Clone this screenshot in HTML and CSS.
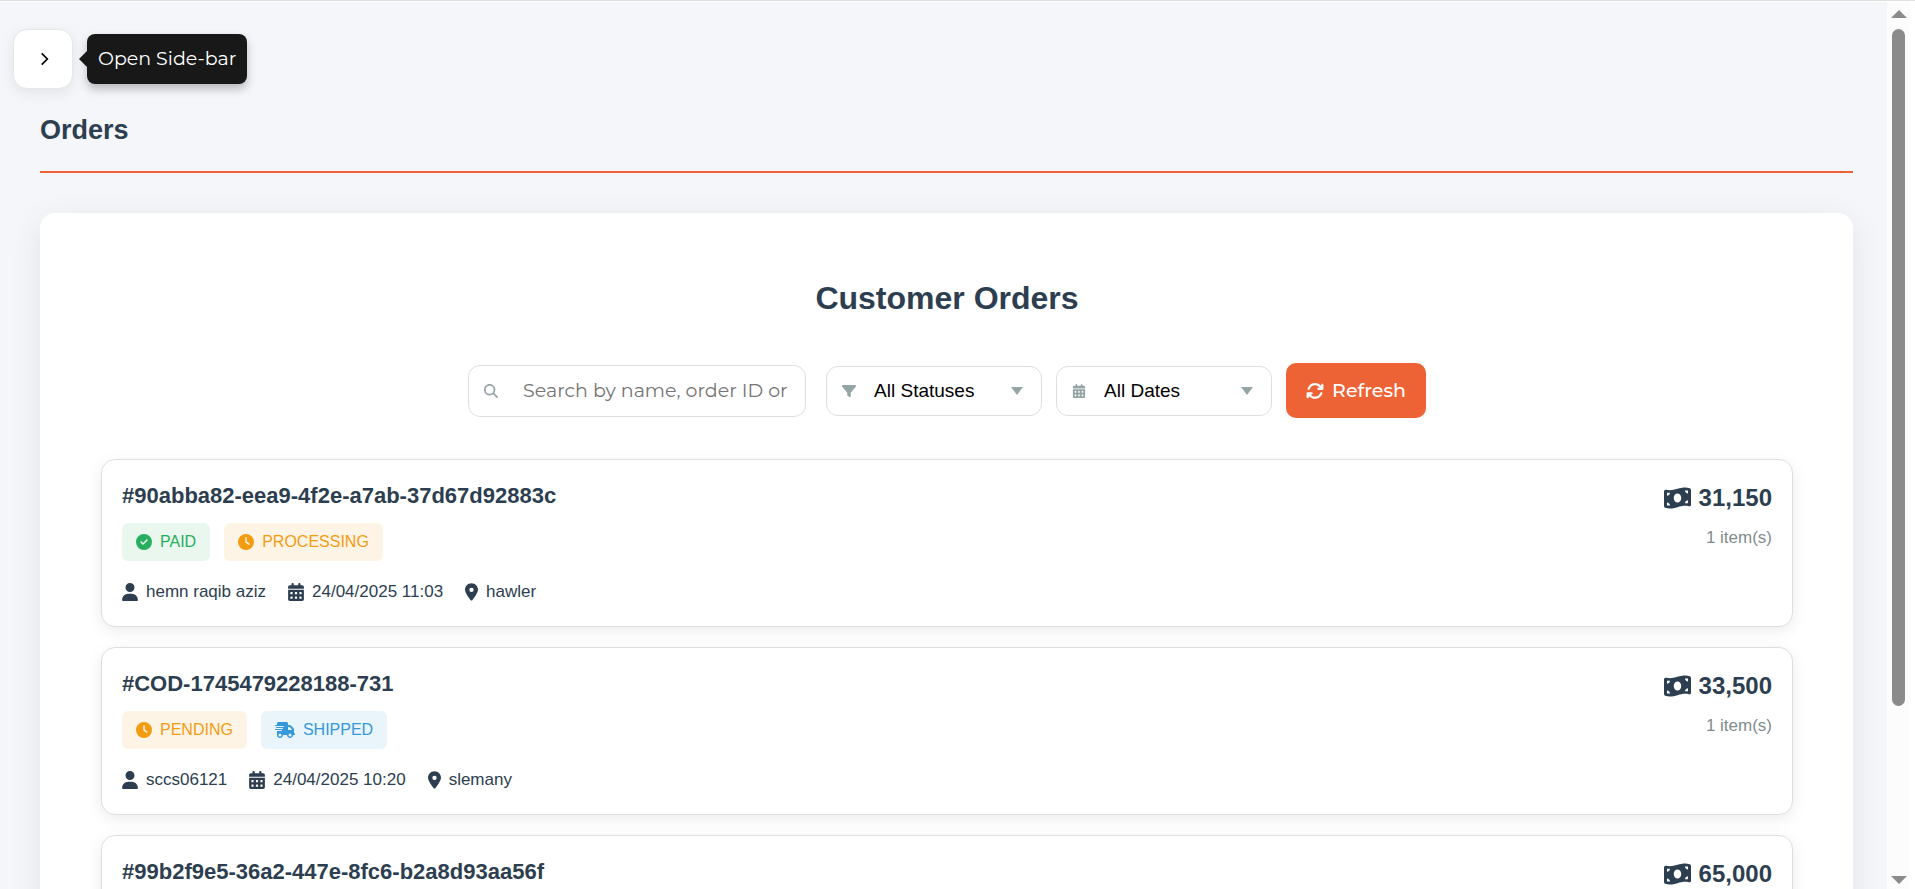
FILE: index.html
```html
<!DOCTYPE html>
<html lang="en">
<head>
<meta charset="utf-8">
<title>Orders</title>
<link rel="stylesheet" href="styles.css">
</head>
<body>
<svg class="sprite" aria-hidden="true">
  <symbol id="check" viewBox="0 0 512 512"><path d="M256 512A256 256 0 1 0 256 0a256 256 0 1 0 0 512zM369 209L241 337c-9.4 9.4-24.6 9.4-33.9 0l-64-64c-9.4-9.4-9.4-24.6 0-33.9s24.6-9.4 33.9 0l47 47L335 175c9.4-9.4 24.6-9.4 33.9 0s9.4 24.6 0 33.9z"/></symbol>
  <symbol id="clock" viewBox="0 0 512 512"><path d="M256 0a256 256 0 1 1 0 512A256 256 0 1 1 256 0zM232 120l0 136c0 8 4 15.5 10.7 20l96 64c11 7.4 25.9 4.4 33.3-6.7s4.4-25.9-6.7-33.3L280 243.2 280 120c0-13.3-10.7-24-24-24s-24 10.7-24 24z"/></symbol>
  <symbol id="user" viewBox="0 0 448 512"><path d="M224 256A128 128 0 1 0 224 0a128 128 0 1 0 0 256zm-45.700 48C79.800 304 0 383.800 0 482.300C0 498.700 13.300 512 29.700 512l388.600 0c16.400 0 29.700-13.300 29.700-29.700C448 383.800 368.200 304 269.700 304l-91.400 0z"/></symbol>
  <symbol id="calendar" viewBox="0 0 448 512"><path fill-rule="evenodd" d="M128 0c17.700 0 32 14.300 32 32v32h128V32c0-17.700 14.300-32 32-32s32 14.300 32 32v32h48c26.500 0 48 21.500 48 48v48H0v-48c0-26.500 21.500-48 48-48h48V32c0-17.700 14.300-32 32-32zM0 192h448v272c0 26.500-21.500 48-48 48H48c-26.500 0-48-21.500-48-48zM80 256q-16 0-16 16v32q0 16 16 16h32q16 0 16-16v-32q0-16-16-16zM208 256q-16 0-16 16v32q0 16 16 16h32q16 0 16-16v-32q0-16-16-16zM336 256q-16 0-16 16v32q0 16 16 16h32q16 0 16-16v-32q0-16-16-16zM80 384q-16 0-16 16v32q0 16 16 16h32q16 0 16-16v-32q0-16-16-16zM208 384q-16 0-16 16v32q0 16 16 16h32q16 0 16-16v-32q0-16-16-16zM336 384q-16 0-16 16v32q0 16 16 16h32q16 0 16-16v-32q0-16-16-16z"/></symbol>
  <symbol id="pin" viewBox="0 0 384 512"><path d="M215.700 499.200C267 435 384 279.400 384 192C384 86 298 0 192 0S0 86 0 192c0 87.400 117 243 168.300 307.200c12.300 15.300 35.100 15.300 47.400 0zM192 128a64 64 0 1 1 0 128 64 64 0 1 1 0-128z"/></symbol>
  <symbol id="filter" viewBox="0 0 512 512"><path d="M3.900 54.900C10.500 40.900 24.500 32 40 32l432 0c15.500 0 29.500 8.900 36.100 22.900s4.600 30.500-5.200 42.500L320 320.900 320 448c0 12.100-6.800 23.200-17.700 28.600s-23.800 4.300-33.500-3l-64-48c-8.100-6-12.800-15.500-12.800-25.600l0-79.100L9 97.300C-.7 85.400-2.800 68.800 3.900 54.900z"/></symbol>
  <symbol id="search" viewBox="0 0 512 512"><path d="M416 208c0 45.900-14.900 88.300-40 122.700L502.600 457.400c12.500 12.500 12.500 32.800 0 45.300s-32.800 12.500-45.300 0L330.700 376c-34.400 25.200-76.800 40-122.700 40C93.100 416 0 322.900 0 208S93.100 0 208 0S416 93.100 416 208zM208 352a144 144 0 1 0 0-288 144 144 0 1 0 0 288z"/></symbol>
  <symbol id="refresh" viewBox="0 0 512 512"><path d="M105.100 202.600c7.700-21.800 20.200-42.300 37.800-59.800c62.500-62.500 163.800-62.500 226.300 0L386.300 160 352 160c-17.700 0-32 14.300-32 32s14.300 32 32 32l111.900 0c17.700 0 32-14.300 32-32l0-112c0-17.700-14.300-32-32-32s-32 14.300-32 32l0 35.200L414.400 97.600c-87.500-87.500-229.300-87.500-316.800 0C73.200 122 55.600 150.700 44.800 181.400c-5.900 16.700 2.900 34.900 19.500 40.800s34.900-2.900 40.800-19.500zM39 289.300c-5 1.500-9.800 4.200-13.700 8.200c-4 4-6.700 8.800-8.100 14c-.3 1.200-.6 2.500-.8 3.800c-.3 1.700-.4 3.400-.4 5.100L16 432c0 17.700 14.300 32 32 32s32-14.300 32-32l0-35.100 17.600 17.500c87.500 87.400 229.300 87.400 316.700 0c24.400-24.400 42.100-53.100 52.900-83.800c5.900-16.700-2.900-34.900-19.500-40.800s-34.900 2.900-40.800 19.500c-7.700 21.800-20.200 42.300-37.800 59.800c-62.500 62.500-163.800 62.500-226.300 0l-.1-.1L125.600 352l34.400 0c17.700 0 32-14.300 32-32s-14.300-32-32-32L48.400 288c-1.600 0-3.200 .1-4.800 .3s-3.100 .5-4.600 1z"/></symbol>
  <symbol id="money" viewBox="0 0 576 512"><path fill-rule="evenodd" d="M0 112.500V422.300c0 18 10.100 35 27 41.300c87 32.500 174 10.300 261-11.900c79.800-20.300 159.600-40.700 239.300-18.900c23 6.300 48.700-9.500 48.700-33.400V89.700c0-18-10.100-35-27-41.300C462 15.900 375 38.100 288 60.300C208.200 80.600 128.400 100.900 48.700 79.100C25.600 72.800 0 88.600 0 112.500zM288 352c-44.200 0-80-43-80-96s35.800-96 80-96s80 43 80 96s-35.800 96-80 96zM64 352c35.300 0 64 28.700 64 64H64V352zM128 144c0 35.300-28.700 64-64 64V144h64zM512 304v64H448c0-35.300 28.700-64 64-64zM448 96h64v64c-35.300 0-64-28.700-64-64z"/></symbol>
  <symbol id="truck" viewBox="0 0 640 512"><path d="M112 0C85.500 0 64 21.500 64 48l0 48L16 96c-8.800 0-16 7.200-16 16s7.200 16 16 16l48 0 208 0c8.800 0 16 7.200 16 16s-7.200 16-16 16L64 160l-16 0c-8.800 0-16 7.200-16 16s7.200 16 16 16l16 0 176 0c8.800 0 16 7.200 16 16s-7.200 16-16 16L64 224l-48 0c-8.800 0-16 7.200-16 16s7.200 16 16 16l48 0 144 0c8.800 0 16 7.200 16 16s-7.200 16-16 16L64 288l0 128c0 53 43 96 96 96s96-43 96-96l128 0c0 53 43 96 96 96s96-43 96-96l32 0c17.700 0 32-14.300 32-32s-14.300-32-32-32l0-64 0-32 0-18.700c0-17-6.700-33.300-18.700-45.300L512 114.700c-12-12-28.300-18.700-45.300-18.700L416 96l0-48c0-26.500-21.500-48-48-48L112 0zM544 237.300l0 18.700-128 0 0-96 50.700 0L544 237.300zM160 368a48 48 0 1 1 0 96 48 48 0 1 1 0-96zm272 48a48 48 0 1 1 96 0 48 48 0 1 1 -96 0z"/></symbol>
</svg>

<div class="app">
  <main class="page">
    <div class="topbar">
      <button class="toggle" type="button" aria-label="Open Side-bar">
        <svg class="chevron" viewBox="0 0 8 12"><path d="M1.500 1l5 5-5 5" fill="none" stroke="currentColor" stroke-width="1.500"/></svg>
      </button>
      <div class="tooltip" role="tooltip">Open Side-bar</div>
    </div>

    <h1 class="page-title">Orders</h1>

    <section class="panel">
      <h2 class="panel-title">Customer Orders</h2>

      <form class="toolbar">
        <div class="field search">
          <svg class="field-icon"><use href="#search"/></svg>
          <input type="text" aria-label="Search orders" placeholder="Search by name, order ID or">
        </div>
        <div class="filters">
          <div class="field pick">
            <svg class="field-icon"><use href="#filter"/></svg>
            <select aria-label="Status"><option>All Statuses</option></select>
            <span class="caret"></span>
          </div>
          <div class="field pick">
            <svg class="field-icon"><use href="#calendar"/></svg>
            <select aria-label="Date"><option>All Dates</option></select>
            <span class="caret"></span>
          </div>
          <button class="refresh" type="button"><svg class="refresh-icon"><use href="#refresh"/></svg>Refresh</button>
        </div>
      </form>

      <div class="orders">
        <article class="order">
          <div class="order-main">
            <h3 class="order-id">#90abba82-eea9-4f2e-a7ab-37d67d92883c</h3>
            <div class="badges">
              <span class="badge green"><svg class="badge-icon"><use href="#check"/></svg>PAID</span>
              <span class="badge amber"><svg class="badge-icon"><use href="#clock"/></svg>PROCESSING</span>
            </div>
            <div class="meta">
              <span class="meta-item"><svg class="meta-icon"><use href="#user"/></svg>hemn raqib aziz</span>
              <span class="meta-item"><svg class="meta-icon"><use href="#calendar"/></svg>24/04/2025 11:03</span>
              <span class="meta-item"><svg class="meta-icon narrow"><use href="#pin"/></svg>hawler</span>
            </div>
          </div>
          <div class="order-side">
            <div class="total"><svg class="money"><use href="#money"/></svg>31,150</div>
            <div class="count">1 item(s)</div>
          </div>
        </article>

        <article class="order">
          <div class="order-main">
            <h3 class="order-id">#COD-1745479228188-731</h3>
            <div class="badges">
              <span class="badge amber"><svg class="badge-icon"><use href="#clock"/></svg>PENDING</span>
              <span class="badge blue"><svg class="badge-icon wide"><use href="#truck"/></svg>SHIPPED</span>
            </div>
            <div class="meta">
              <span class="meta-item"><svg class="meta-icon"><use href="#user"/></svg>sccs06121</span>
              <span class="meta-item"><svg class="meta-icon"><use href="#calendar"/></svg>24/04/2025 10:20</span>
              <span class="meta-item"><svg class="meta-icon narrow"><use href="#pin"/></svg>slemany</span>
            </div>
          </div>
          <div class="order-side">
            <div class="total"><svg class="money"><use href="#money"/></svg>33,500</div>
            <div class="count">1 item(s)</div>
          </div>
        </article>

        <article class="order">
          <div class="order-main">
            <h3 class="order-id">#99b2f9e5-36a2-447e-8fc6-b2a8d93aa56f</h3>
          </div>
          <div class="order-side">
            <div class="total"><svg class="money"><use href="#money"/></svg>65,000</div>
          </div>
        </article>
      </div>
    </section>
  </main>

  <div class="scrollbar" aria-hidden="true">
    <span class="arrow up"></span>
    <span class="track"><span class="thumb"></span></span>
    <span class="arrow down"></span>
  </div>
</div>
</body>
</html>
```
FILE: styles.css
```css
* { box-sizing: border-box; }

body {
  margin: 0;
  background: #fff;
  color: #2c3e50;
  font-family: Arial, "Liberation Sans", sans-serif;
}

svg { display: block; flex: none; fill: currentColor; }
.sprite { position: absolute; width: 0; height: 0; }

.app {
  display: flex;
  height: 100vh;
  padding: 1px 5px 0 0;
  border-top: 1px solid #dfdfdf;
  overflow: hidden;
}

.page {
  flex: 1;
  min-width: 0;
  padding: 0 34px 0 40px;
  background: #f4f6fa;
  overflow: hidden;
}

/* Sidebar toggle */
.topbar {
  display: flex;
  align-items: center;
  gap: 14px;
  margin: 27px 0 22px -27px;
}

.toggle {
  display: grid;
  place-items: center;
  width: 60px;
  height: 60px;
  padding: 0 0 0 3px;
  border: 1px solid #e6e7e9;
  border-radius: 14px;
  background: #fff;
  color: #000;
  box-shadow: 0 4px 14px rgba(0, 0, 0, .08);
}

.chevron { width: 9px; height: 14px; }

.tooltip {
  position: relative;
  padding: 0 11px;
  border-radius: 8px;
  background: #181818;
  color: #fff;
  font: 19px/50px Montserrat, Inter, sans-serif;
  box-shadow: 0 5px 10px rgba(0, 0, 0, .25);
}

.tooltip::before {
  content: "";
  position: absolute;
  top: 50%;
  right: 100%;
  margin-top: -8px;
  border: 8px solid transparent;
  border-left: 0;
  border-right-color: #181818;
}

.page-title {
  margin: 0 0 40px;
  padding-bottom: 22px;
  border-bottom: 2px solid #ee6336;
  font-size: 27px;
  line-height: 38px;
}

.panel {
  padding: 60px 60px 40px 61px;
  border-radius: 15px;
  background: #fff;
  box-shadow: 0 8px 32px rgba(0, 0, 0, .08);
}

.panel-title {
  margin: 0 0 40px;
  font-size: 32px;
  line-height: 50px;
  text-align: center;
}

/* Search and filters */
.toolbar, .filters {
  display: flex;
  align-items: center;
  justify-content: center;
}
.toolbar { gap: 20px; margin-bottom: 41px; }
.filters { gap: 14px; }

.field { position: relative; }

.field input, .field select {
  width: 100%;
  border: 1px solid #dcdfe0;
  border-radius: 12px;
  background: #fff;
  outline: 0;
}

.field input {
  height: 52px;
  padding: 0 14px 0 54px;
  font: 19px Montserrat, Inter, sans-serif;
}
.field input::placeholder { color: #757575; }

.field select {
  height: 50px;
  padding: 0 44px 0 47px;
  appearance: none;
  color: #000;
  font: 19px Arial, "Liberation Sans", sans-serif;
}

.search { width: 338px; }
.pick { width: 216px; }

.field-icon {
  position: absolute;
  top: 50%;
  left: 16px;
  width: 14px;
  height: 14px;
  margin-top: -7px;
  color: #95a5a6;
}

.caret {
  position: absolute;
  top: 50%;
  right: 19px;
  margin-top: -4px;
  border: 6px solid transparent;
  border-top: 8px solid #95a5a6;
  border-bottom: 0;
  pointer-events: none;
}

.refresh {
  display: flex;
  align-items: center;
  gap: 8px;
  height: 55px;
  padding: 0 20px;
  border: 0;
  border-radius: 10px;
  background: #ee6336;
  color: #fff;
  font: 500 19px Montserrat, Inter, sans-serif;
}
.refresh-icon { width: 18px; height: 18px; }

/* Order list */
.orders { display: grid; gap: 20px; }

.order {
  display: flex;
  justify-content: space-between;
  padding: 20px;
  border: 1px solid #dcdfe0;
  border-radius: 14px;
  background: #fff;
  box-shadow: 0 4px 15px rgba(0, 0, 0, .08);
}

.order-id {
  margin: 0 0 11px;
  font-size: 22px;
  line-height: 32px;
}

.badges { display: flex; gap: 14px; margin-bottom: 17px; }

.badge {
  display: flex;
  align-items: center;
  gap: 8px;
  padding: 0 14px;
  border-radius: 6px;
  font-size: 16px;
  line-height: 38px;
}
.badge-icon { width: 16px; height: 16px; }
.badge-icon.wide { width: 20px; }
.green { background: #e9f7ef; color: #27ae60; }
.amber { background: #fef4e6; color: #f39c12; }
.blue { background: #eaf4fb; color: #3498db; }

.meta { display: flex; gap: 22px; }
.meta-item {
  display: flex;
  align-items: center;
  gap: 8px;
  font-size: 17px;
  line-height: 28px;
}
.meta-icon { width: 16px; height: 18px; }
.meta-icon.narrow { width: 13px; }

.order-side { text-align: right; }

.total {
  display: flex;
  align-items: center;
  gap: 8px;
  margin-bottom: 4px;
  font-size: 24px;
  font-weight: bold;
  line-height: 36px;
}
.money { width: 27px; height: 24px; }

.count {
  color: #7f8c8d;
  font-size: 17px;
  line-height: 36px;
}

/* Scrollbar */
.scrollbar {
  display: flex;
  flex-direction: column;
  align-items: center;
  width: 23px;
  padding: 8px 0 5px;
  background: #fcfcfc;
}

.arrow { border: 8px solid transparent; }
.up { border-top: 0; border-bottom-color: #8b8b8b; }
.down { border-bottom: 0; border-top-color: #8b8b8b; }

.track { flex: 1; padding: 11px 0; }

.thumb {
  display: block;
  width: 13px;
  height: 81%;
  border-radius: 7px;
  background: #8b8b8b;
}
```
